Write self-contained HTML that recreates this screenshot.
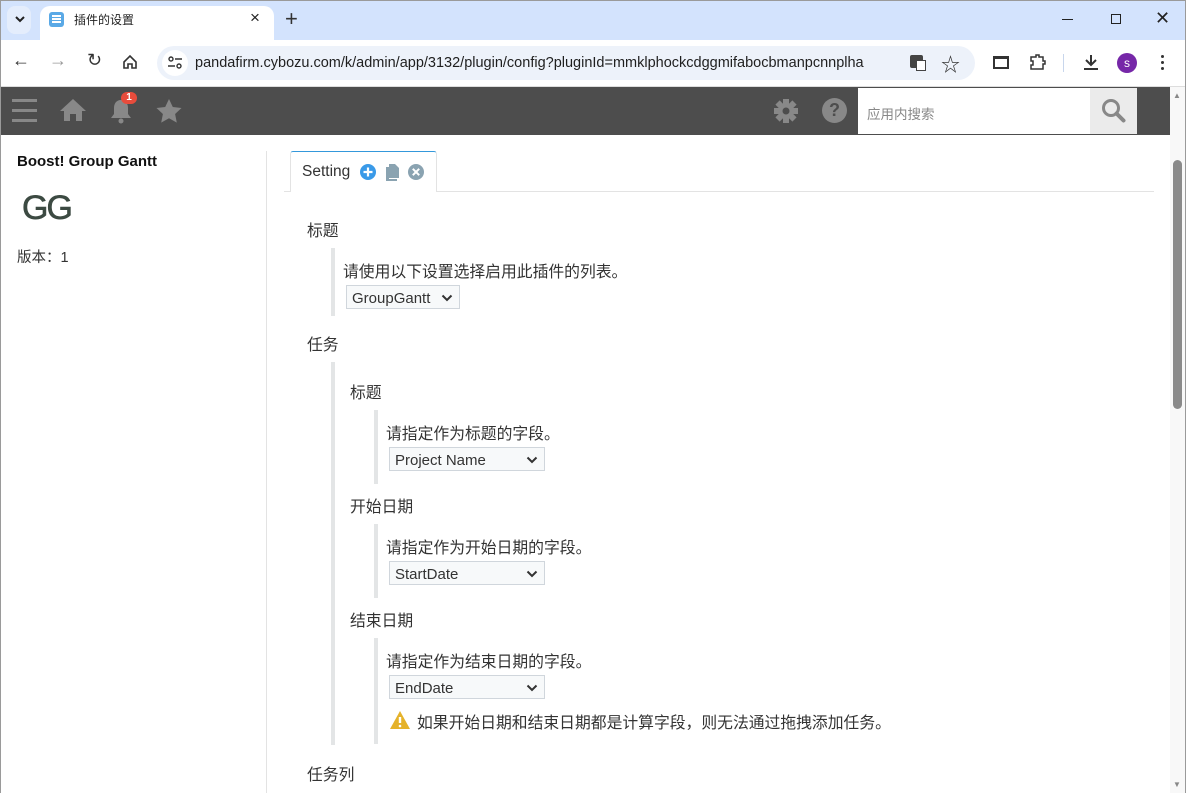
<!DOCTYPE html>
<html><head><meta charset="utf-8"><style>
*{box-sizing:border-box;margin:0;padding:0}
body{width:1186px;height:793px;overflow:hidden;position:relative;background:#fff;font-family:"Liberation Sans","Noto Sans CJK SC",sans-serif;color:#333}
.abs{position:absolute}
.win{position:absolute;inset:0;border:1px solid #9a9a9a;border-bottom:none}
.sel{position:absolute;height:24px;border:1px solid #d0d6dc;background:#f7f9fa;font-size:15px;color:#333;padding:4px 0 0 5px}
.sel svg{position:absolute;right:6px;top:8px}
.bar{position:absolute;width:4px;background:#e3e5e6}
.t{position:absolute;font-size:15.8px;color:#333;white-space:nowrap}
</style></head><body>
<div class="abs" style="left:0;top:0;width:1186px;height:40px;background:#d3e3fd"></div>
<div class="abs" style="left:7px;top:6px;width:24px;height:28px;background:#e4edfc;border-radius:8px"></div>
<svg class="abs" style="left:14px;top:15px" width="12" height="8"><path d="M2 2l4 4 4-4" stroke="#222" stroke-width="2" fill="none"/></svg>
<div class="abs" style="left:40px;top:6px;width:234px;height:34px;background:#fff;border-radius:10px 10px 0 0"></div>
<div class="abs" style="left:49px;top:12px;width:15px;height:15px;background:#5aa9e6;border-radius:3px"></div>
<div class="abs" style="left:52px;top:15px;width:9px;height:2px;background:#fff;box-shadow:0 3px 0 #fff,0 6px 0 #fff"></div>
<div class="abs" style="left:74px;top:11px;font-size:12px;color:#222;font-family:'Noto Sans CJK SC',sans-serif">插件的设置</div>
<div class="abs" style="left:250px;top:8px;font-size:17px;color:#222">×</div>
<div class="abs" style="left:285px;top:6px;font-size:22px;color:#333">+</div>
<div class="abs" style="left:1062px;top:19px;width:11px;height:1px;background:#222"></div>
<div class="abs" style="left:1111px;top:14px;width:10px;height:10px;border:1px solid #222"></div>
<div class="abs" style="left:1155px;top:8px;font-size:18px;color:#222">✕</div>
<div class="abs" style="left:0;top:40px;width:1186px;height:46px;background:#fff"></div>
<div class="abs" style="left:0;top:86px;width:1186px;height:1px;background:#ddd"></div>
<div class="abs" style="left:12px;top:50px;font-size:18px;color:#333">←</div>
<div class="abs" style="left:49px;top:50px;font-size:18px;color:#999">→</div>
<div class="abs" style="left:87px;top:50px;font-size:18px;color:#333">↻</div>
<svg class="abs" style="left:122px;top:54px" width="16" height="16"><path d="M2 8L8 2l6 6v6H10V10H6v4H2z" stroke="#333" stroke-width="1.6" fill="none"/></svg>
<div class="abs" style="left:157px;top:46px;width:818px;height:34px;background:#edf2fa;border-radius:17px"></div>
<div class="abs" style="left:162px;top:50px;width:26px;height:26px;background:#fff;border-radius:13px"></div>
<svg class="abs" style="left:167px;top:56px" width="16" height="14"><circle cx="4" cy="3" r="2" stroke="#333" fill="none" stroke-width="1.4"/><path d="M8 3h7M1 10h7" stroke="#333" stroke-width="1.4"/><circle cx="12" cy="10" r="2" stroke="#333" fill="none" stroke-width="1.4"/></svg>
<div class="abs" style="left:195px;top:55px;font-size:14.5px;color:#1f1f1f">pandafirm.cybozu.com/k/admin/app/3132/plugin/config?pluginId=mmklphockcdggmifabocbmanpcnnplha</div>
<div class="abs" style="left:910px;top:55px;width:13px;height:13px;background:#444;border-radius:2px"></div>
<div class="abs" style="left:916px;top:60px;width:10px;height:11px;border:1px solid #444;background:#fff"></div>
<div class="abs" style="left:941px;top:50px;font-size:19px;color:#333">☆</div>
<div class="abs" style="left:993px;top:56px;width:16px;height:13px;border:2px solid #333;border-top-width:3px"></div>
<svg class="abs" style="left:1028px;top:53px" width="18" height="18"><path d="M3 4h5V2h3v2h4v4h2v3h-2v5H3v-4h2V8H3z" stroke="#333" stroke-width="1.5" fill="none"/></svg>
<div class="abs" style="left:1063px;top:54px;width:1px;height:18px;background:#c8d6ec"></div>
<svg class="abs" style="left:1082px;top:53px" width="18" height="18"><path d="M9 2v10M4 7l5 5 5-5M2 16h14" stroke="#333" stroke-width="2" fill="none"/></svg>
<div class="abs" style="left:1117px;top:53px;width:20px;height:20px;background:#7627a8;border-radius:10px;color:#fff;font-size:12px;text-align:center;line-height:20px">s</div>
<div class="abs" style="left:1161px;top:55px;width:3px;height:3px;background:#333;border-radius:2px;box-shadow:0 6px 0 #333,0 12px 0 #333"></div>
<div class="abs" style="left:1px;top:87px;width:1169px;height:48px;background:#4d4d4d"></div>
<div class="abs" style="left:12px;top:99px;width:25px;height:3px;background:#888;box-shadow:0 10px 0 #888,0 20px 0 #888"></div>
<svg class="abs" style="left:59px;top:97px" width="28" height="26"><path d="M14 2L1 14h4v10h6v-7h6v7h6V14h4z" fill="#888"/></svg>
<svg class="abs" style="left:107px;top:97px" width="28" height="28"><path d="M14 3c-5 0-7 4-7 8v6l-3 4h20l-3-4v-6c0-4-2-8-7-8z" fill="#888"/><circle cx="14" cy="24" r="2.5" fill="#888"/></svg>
<div class="abs" style="left:121px;top:92px;width:16px;height:12px;background:#e74c3c;border-radius:7px;color:#fff;font-size:10px;font-weight:bold;text-align:center;line-height:12px">1</div>
<svg class="abs" style="left:155px;top:98px" width="28" height="26"><path d="M14 1l3.8 8 8.7 1-6.4 6 1.7 8.6L14 20.3l-7.8 4.3L7.9 16l-6.4-6 8.7-1z" fill="#888"/></svg>
<svg class="abs" style="left:773px;top:98px" width="26" height="26"><g fill="#888" transform="translate(13 13)"><rect x="-3" y="-12" width="6" height="24"/><rect x="-3" y="-12" width="6" height="24" transform="rotate(45)"/><rect x="-3" y="-12" width="6" height="24" transform="rotate(90)"/><rect x="-3" y="-12" width="6" height="24" transform="rotate(135)"/><circle r="8"/></g><circle cx="13" cy="13" r="3.5" fill="#4d4d4d"/></svg>
<div class="abs" style="left:822px;top:98px;width:25px;height:25px;background:#888;border-radius:13px;color:#4d4d4d;font-weight:bold;font-size:18px;text-align:center;line-height:25px">?</div>
<div class="abs" style="left:858px;top:88px;width:232px;height:46px;background:#fff"></div>
<div class="abs" style="left:867px;top:103px;font-size:13.5px;color:#888">应用内搜索</div>
<div class="abs" style="left:1090px;top:88px;width:47px;height:46px;background:#ebebeb"></div>
<svg class="abs" style="left:1101px;top:98px" width="26" height="26"><circle cx="10" cy="10" r="7.5" stroke="#888" stroke-width="3" fill="none"/><path d="M15.5 15.5l7 7" stroke="#888" stroke-width="4" stroke-linecap="round"/></svg>
<div class="abs" style="left:1170px;top:87px;width:15px;height:706px;background:#f8f8f8"></div>
<div class="abs" style="left:1173px;top:160px;width:9px;height:249px;background:#8a8a8a;border-radius:5px"></div>
<div class="abs" style="left:1173px;top:91px;font-size:8px;color:#888">▲</div>
<div class="abs" style="left:1173px;top:780px;font-size:8px;color:#888">▼</div>
<div class="abs" style="left:17px;top:153px;font-size:15px;font-weight:bold;color:#111">Boost! Group Gantt</div>
<div class="abs" style="left:22px;top:189px;font-size:34px;color:#3c4a42;letter-spacing:-2px;-webkit-text-stroke:0.6px #3c4a42">GG</div>
<div class="abs" style="left:17px;top:246px;font-size:14.5px;color:#333">版本：1</div>
<div class="abs" style="left:266px;top:151px;width:1px;height:642px;background:#e3e3e3"></div>
<div class="abs" style="left:284px;top:191px;width:870px;height:1px;background:#e3e3e3"></div>
<div class="abs" style="left:290px;top:151px;width:147px;height:41px;background:#fff;border:1px solid #e3e3e3;border-top:1px solid #3498db;border-bottom:none;border-radius:3px 3px 0 0"></div>
<div class="t" style="left:302px;top:163px;font-size:15.5px;color:#333">Setting</div>
<svg class="abs" style="left:359px;top:163px" width="18" height="18"><circle cx="9" cy="9" r="8" fill="#3a9ae8"/><path d="M9 4.5v9M4.5 9h9" stroke="#fff" stroke-width="2.2"/></svg>
<svg class="abs" style="left:385px;top:163px" width="16" height="18"><path d="M4 1h6l4 4v10H4z" fill="#8aa3b1"/><path d="M1 4h3v12h8v2H1z" fill="#8aa3b1"/></svg>
<svg class="abs" style="left:407px;top:163px" width="18" height="18"><circle cx="9" cy="9" r="8" fill="#8aa3b1"/><path d="M5.8 5.8l6.4 6.4M12.2 5.8l-6.4 6.4" stroke="#fff" stroke-width="2"/></svg>
<div class="t" style="left:307px;top:218px">标题</div>
<div class="bar" style="left:331px;top:248px;height:68px"></div>
<div class="t" style="left:343px;top:259px">请使用以下设置选择启用此插件的列表。</div>
<div class="sel" style="left:346px;top:285px;width:114px">GroupGantt<svg width="12" height="8"><path d="M1.5 1.5l4.5 4.5 4.5-4.5" stroke="#333" stroke-width="2" fill="none"/></svg></div>
<div class="t" style="left:307px;top:332px">任务</div>
<div class="bar" style="left:331px;top:362px;height:383px"></div>
<div class="t" style="left:350px;top:380px">标题</div>
<div class="bar" style="left:374px;top:410px;height:74px"></div>
<div class="t" style="left:386px;top:421px">请指定作为标题的字段。</div>
<div class="sel" style="left:389px;top:447px;width:156px">Project Name<svg width="12" height="8"><path d="M1.5 1.5l4.5 4.5 4.5-4.5" stroke="#333" stroke-width="2" fill="none"/></svg></div>
<div class="t" style="left:350px;top:494px">开始日期</div>
<div class="bar" style="left:374px;top:524px;height:74px"></div>
<div class="t" style="left:386px;top:535px">请指定作为开始日期的字段。</div>
<div class="sel" style="left:389px;top:561px;width:156px">StartDate<svg width="12" height="8"><path d="M1.5 1.5l4.5 4.5 4.5-4.5" stroke="#333" stroke-width="2" fill="none"/></svg></div>
<div class="t" style="left:350px;top:608px">结束日期</div>
<div class="bar" style="left:374px;top:638px;height:106px"></div>
<div class="t" style="left:386px;top:649px">请指定作为结束日期的字段。</div>
<div class="sel" style="left:389px;top:675px;width:156px">EndDate<svg width="12" height="8"><path d="M1.5 1.5l4.5 4.5 4.5-4.5" stroke="#333" stroke-width="2" fill="none"/></svg></div>
<svg class="abs" style="left:389px;top:710px" width="22" height="20"><path d="M11 1L21 19H1z" fill="#e5b22a"/><path d="M11 7v6" stroke="#fff" stroke-width="2.4"/><circle cx="11" cy="16" r="1.3" fill="#fff"/></svg>
<div class="t" style="left:417px;top:710px">如果开始日期和结束日期都是计算字段，则无法通过拖拽添加任务。</div>
<div class="t" style="left:307px;top:762px">任务列</div>
<div class="win"></div>
</body></html>
